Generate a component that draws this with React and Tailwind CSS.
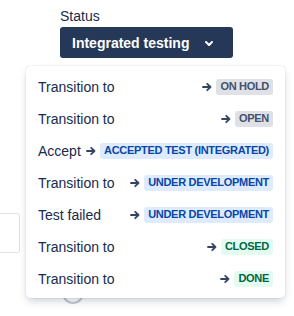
import React from "react";

const transitions = [
  { label: "Transition to", status: "ON HOLD", tone: "gray" },
  { label: "Transition to", status: "OPEN", tone: "gray" },
  { label: "Accept", status: "ACCEPTED TEST (INTEGRATED)", tone: "blue" },
  { label: "Transition to", status: "UNDER DEVELOPMENT", tone: "blue" },
  { label: "Test failed", status: "UNDER DEVELOPMENT", tone: "blue" },
  { label: "Transition to", status: "CLOSED", tone: "green" },
  { label: "Transition to", status: "DONE", tone: "green" },
];

const tones = {
  gray: "bg-[#dfe1e6] text-[#42526e]",
  blue: "bg-[#deebff] text-[#0747a6]",
  green: "bg-[#e3fcef] text-[#006644]",
};

function Arrow() {
  return (
    <svg width="10" height="10" viewBox="0 0 10 10" className="text-[#344563]">
      <path
        d="M1 5H8.5M5.2 1.8L8.5 5L5.2 8.2"
        fill="none"
        stroke="currentColor"
        strokeWidth="1.8"
        strokeLinecap="round"
        strokeLinejoin="round"
      />
    </svg>
  );
}

function Lozenge({ children, tone }) {
  return (
    <span
      className={`inline-flex items-center h-4 px-1 rounded-[3px] text-[11px] tracking-[-0.3px] font-bold leading-none whitespace-nowrap ${tones[tone]}`}
    >
      {children}
    </span>
  );
}

function App() {
  return (
    <div
      className="relative w-[294px] h-[316px] overflow-hidden bg-white"
      style={{ fontFamily: '"Liberation Sans", Arial, sans-serif' }}
    >
      <div className="pl-[60px] pt-[8px]">
        <div className="text-sm leading-4 text-[#172b4d] mb-[3px]">Status</div>
        <button className="flex items-center gap-2 h-[31px] pl-3 pr-3 rounded-[3px] bg-[#253858] text-white text-sm font-bold">
          Integrated testing
          <svg width="24" height="24" viewBox="0 0 24 24">
            <path
              fill="currentColor"
              d="M8.292 10.293a1.009 1.009 0 000 1.419l2.939 2.965c.218.215.5.322.779.322s.556-.107.769-.322l2.93-2.955a1.01 1.01 0 000-1.419.987.987 0 00-1.406 0l-2.298 2.317-2.307-2.327a.99.99 0 00-1.406 0z"
            />
          </svg>
        </button>
      </div>

      <div className="mt-[155px] -ml-[20px] w-[40px] h-[40px] rounded-[3px] border border-[#dfe1e6]" />
      <div className="mt-[29px] ml-[62px] w-[22px] h-[22px] rounded-full border-2 border-[#c1c7d0]" />

      <div className="absolute left-[26px] top-[66px] w-[259px] py-1 bg-white rounded-[4px] shadow-[0_4px_8px_-2px_rgba(9,30,66,0.25),0_0_1px_rgba(9,30,66,0.31)]">
        {transitions.map((t, i) => (
          <div key={i} className="flex items-center justify-between h-8 px-3 pt-[1px]">
            <span className="text-sm text-[#172b4d] whitespace-nowrap">{t.label}</span>
            <span className="flex items-center gap-[4px]">
              <Arrow />
              <Lozenge tone={t.tone}>{t.status}</Lozenge>
            </span>
          </div>
        ))}
      </div>
    </div>
  );
}

export default App;
